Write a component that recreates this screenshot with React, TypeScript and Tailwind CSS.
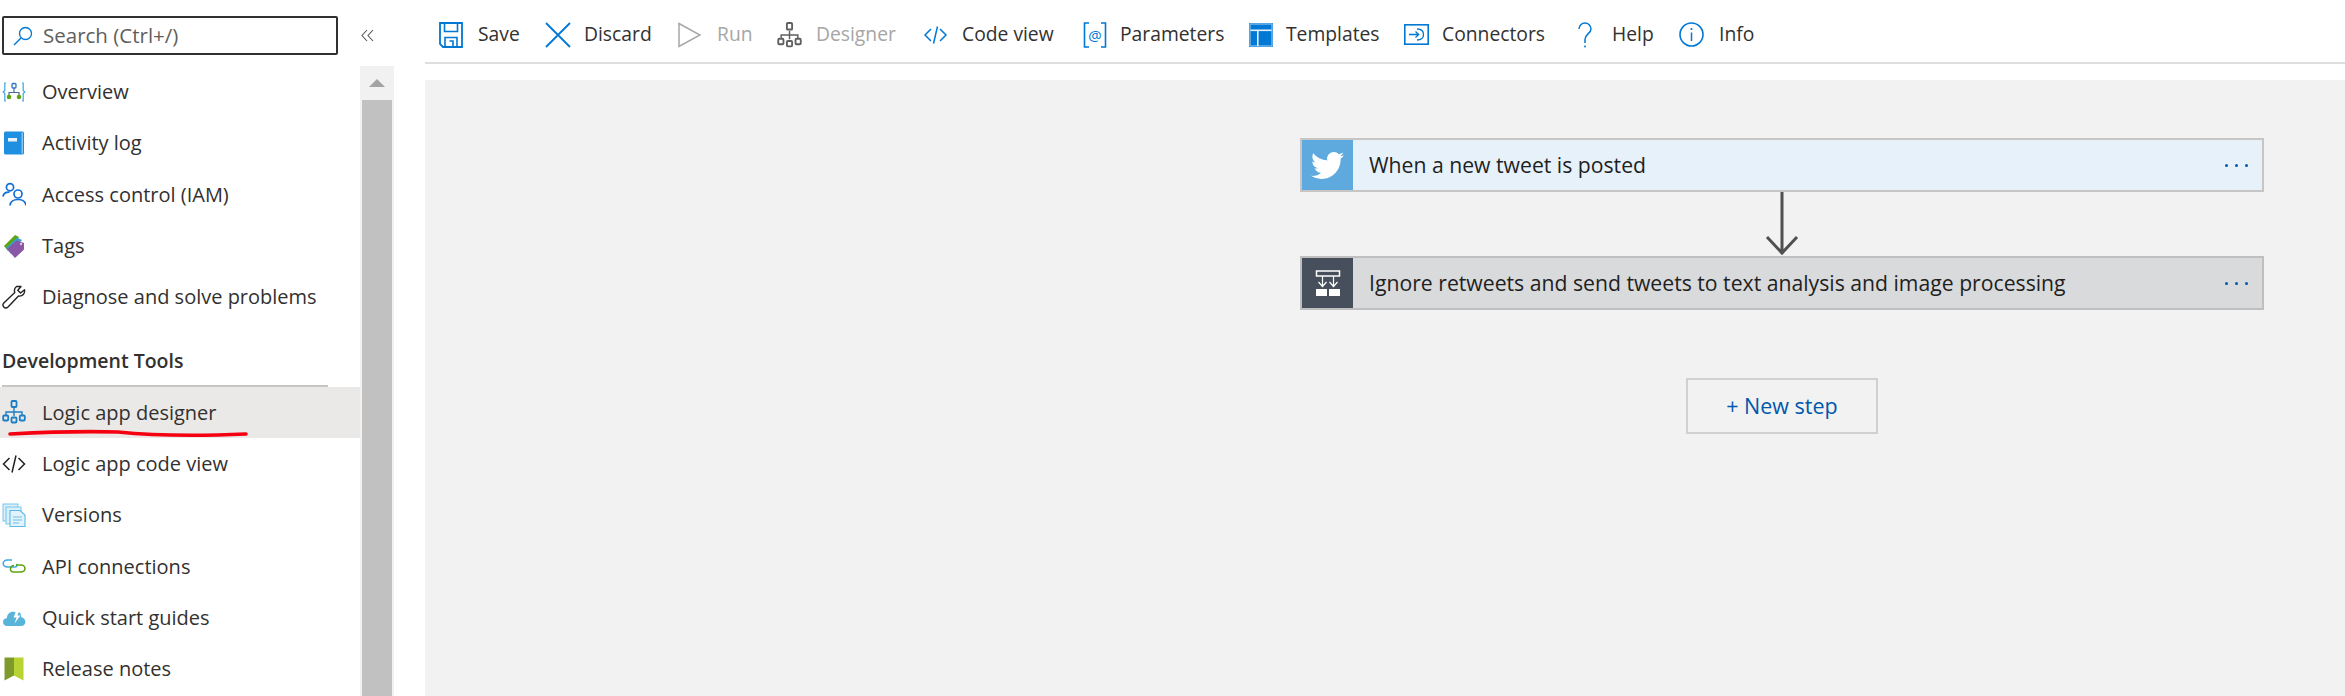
import type { ReactNode } from "react";
import { FaTwitter } from "react-icons/fa";

const BLUE = "#0078d4";

function Svg({ w, h, vb, children }: { w: number; h: number; vb?: string; children: ReactNode }) {
  return (
    <svg width={w} height={h} viewBox={vb ?? `0 0 ${w} ${h}`} fill="none" className="block shrink-0">
      {children}
    </svg>
  );
}

/* sidebar icons, drawn on a 24 box */
const OverviewIcon = () => (
  <Svg w={24} h={24}>
    <path d="M4 3H2.8V10.5L1.2 12L2.8 13.5V21H4M20 3H21.2V10.5L22.8 12L21.2 13.5V21H20" stroke="#3ea8dc" strokeWidth="1.2" />
    <path d="M12 8V12.5M7 16V12.5H17V16" stroke="#4a6d9c" strokeWidth="1.2" />
    <rect x="10" y="3.5" width="4" height="4.5" rx="1" fill="#fff" stroke="#2f74c0" strokeWidth="1.3" />
    <circle cx="7" cy="17" r="2.3" fill="#5ea50f" />
    <circle cx="17" cy="17" r="2.3" fill="#5ea50f" />
  </Svg>
);
const ActivityIcon = () => (
  <Svg w={24} h={24}>
    <rect x="2" y="0.5" width="20" height="23" rx="1.5" fill="#1e8fe1" />
    <rect x="19.5" y="1.5" width="1.5" height="21" fill="#83c4f0" />
    <rect x="6" y="7" width="9" height="3.5" fill="#e6f3fc" />
  </Svg>
);
const AccessIcon = () => (
  <Svg w={24} h={24}>
    <circle cx="8" cy="5.2" r="3.6" stroke="#1570d6" strokeWidth="1.7" />
    <path d="M1 14.5C1.5 11.5 4 10 7.5 10.2" stroke="#1570d6" strokeWidth="1.7" />
    <circle cx="16" cy="12" r="4" stroke="#1570d6" strokeWidth="1.7" />
    <path d="M8 23.5C8.5 19.5 11.5 17.5 16 17.5C20.5 17.5 23.5 19.5 24 23.5" stroke="#1570d6" strokeWidth="1.7" />
  </Svg>
);
const TagsIcon = () => (
  <Svg w={24} h={24}>
    <path d="M2 12L13 1L17 3L6 17Z" fill="#5ea50f" />
    <path d="M4 14L15 3.5L20 6L9 20Z" fill="#3aa0c8" />
    <path d="M5 15L14.5 6.5L22 9V15.5L13 24Z" fill="#8a56a8" />
    <circle cx="19" cy="10" r="1.2" fill="#d9c8e6" />
  </Svg>
);
const WrenchIcon = () => (
  <Svg w={24} h={24}>
    <path d="M14.5 1.5L19 1.5L15.8 5.2L18.5 8L22.5 4.8C23.2 8.5 20.5 11.8 16.5 11L6 22C4.5 23.3 2.8 23 1.8 22C0.8 21 0.6 19.5 1.8 18L12.8 7.5C12 5 13 2.5 14.5 1.5Z" stroke="#222" strokeWidth="1.4" strokeLinejoin="round" />
  </Svg>
);
const TreeIcon = ({ color, w = 24, h = 24 }: { color: string; w?: number; h?: number }) => (
  <svg width={w} height={h} viewBox="0 0 24 24" preserveAspectRatio="none" fill="none" className="block shrink-0">
    <path d="M12 8V15M4 15.5V12H20V15.5M12 12V16" stroke={color} strokeWidth="1.4" />
    <rect x="9.5" y="1" width="5" height="6" rx="0.8" fill="none" stroke={color} strokeWidth="1.8" />
    <rect x="1.2" y="15.5" width="5" height="5" rx="1" fill="none" stroke={color} strokeWidth="1.8" />
    <rect x="9.5" y="17.5" width="5" height="5" rx="1" fill="none" stroke={color} strokeWidth="1.8" />
    <rect x="17.8" y="15.5" width="5" height="5" rx="1" fill="none" stroke={color} strokeWidth="1.8" />
  </svg>
);
const CodeIcon = ({ color, w = 24 }: { color: string; w?: number }) => (
  <Svg w={w} h={24} vb="0 0 24 24">
    <path d="M7.5 6L1.5 12L7.5 18M16.5 6L22.5 12L16.5 18M14 3.5L10 20.5" stroke={color} strokeWidth="1.5" />
  </Svg>
);
const VersionsIcon = () => (
  <Svg w={24} h={24}>
    <rect x="1" y="1" width="15" height="17" fill="#d9effa" stroke="#7cc6ea" />
    <rect x="4" y="4" width="15" height="17" fill="#d9effa" stroke="#7cc6ea" />
    <path d="M8 7.5H18L23 12V23.5H8Z" fill="#e3f3fb" stroke="#5cb8e6" strokeWidth="1.1" />
    <path d="M11 14H20M11 17H20M11 20H17" stroke="#6fc0e8" strokeWidth="1.2" />
  </Svg>
);
const ApiIcon = () => (
  <Svg w={24} h={24}>
    <path d="M10 6H5.5C3 6 1.2 7.6 1.2 9.5C1.2 11.4 3 13 5.5 13H13C14.5 13 15.5 11.5 14.5 10" stroke="#3ea8dc" strokeWidth="1.6" />
    <path d="M14 11H19C21.3 11 23 12.6 23 14.5C23 16.4 21.3 18 19 18H11.5C9.5 18 8 16.5 8.5 14.5C9 12 11 11.5 12 11.5" stroke="#5ea50f" strokeWidth="1.6" />
  </Svg>
);
const CloudIcon = () => (
  <Svg w={24} h={24}>
    <path d="M5 20C2.5 20 1 18.2 1 16C1 13.8 2.6 12.2 4.8 12.2C5 8.5 7.8 5.8 11 5.8C12.3 5.8 13.6 6.2 14.5 7L18 6.5C18.8 8 19.2 9.5 19.2 11.2C21.6 11.6 23.4 13.5 23.4 16C23.4 18.3 21.7 20 19.2 20Z" fill="#59b4d9" />
    <path d="M15 3L11.5 11.5H14.5L12.5 17.5L18.5 9.5H15.5L17.5 3Z" fill="#fff" />
  </Svg>
);
const BookmarkIcon = () => (
  <Svg w={24} h={24}>
    <path d="M2.5 0.5H12V18.5L2.5 23.5Z" fill="#7f9a2c" />
    <path d="M12 0.5H21.5V23.5L12 18.5Z" fill="#b8d432" />
  </Svg>
);

/* toolbar icons */
const SaveIcon = () => (
  <Svg w={24} h={26}>
    <path d="M1 1H23V25H4L1 22Z" stroke={BLUE} strokeWidth="1.8" />
    <path d="M5.5 1V9.5H18.5V1M6 25V15.5H18V25M10.5 19H14V25" stroke={BLUE} strokeWidth="1.6" />
  </Svg>
);
const DiscardIcon = () => (
  <Svg w={26} h={26}>
    <path d="M1 1L25 25M25 1L1 25" stroke={BLUE} strokeWidth="1.8" />
  </Svg>
);
const RunIcon = () => (
  <Svg w={23} h={26}>
    <path d="M1 1.5L22 13L1 24.5Z" stroke="#a6a6a6" strokeWidth="1.5" />
  </Svg>
);
const ParamsIcon = () => (
  <Svg w={24} h={26}>
    <path d="M6 1H1.5V25H6M18 1H22.5V25H18" stroke={BLUE} strokeWidth="1.6" />
    <text x="12" y="18.5" textAnchor="middle" fontSize="15" fontFamily="Open Sans, sans-serif" fill={BLUE}>@</text>
  </Svg>
);
const TemplatesIcon = () => (
  <Svg w={24} h={24}>
    <rect width="24" height="24" fill={BLUE} />
    <rect x="1" y="1" width="22" height="22" stroke="#8cc4ec" strokeWidth="1.2" />
    <rect x="1.5" y="6.5" width="21" height="1.6" fill="#e3f1fb" />
    <rect x="8" y="7" width="1.6" height="16" fill="#e3f1fb" />
  </Svg>
);
const ConnectorsIcon = () => (
  <Svg w={25} h={21}>
    <rect x="0.8" y="0.8" width="23.4" height="19.4" stroke={BLUE} strokeWidth="1.6" />
    <path d="M5 10.5H14.5M11.5 7.5L14.7 10.5L11.5 13.5M13 5C17.5 5 19.5 7.5 19.5 10.5C19.5 13.5 17.5 16 13 16" stroke={BLUE} strokeWidth="1.3" />
  </Svg>
);
const HelpIcon = () => (
  <Svg w={16} h={26}>
    <path d="M2 7C2 3.5 4.8 1 8 1C11.2 1 14 3.5 14 7C14 11.5 8 12 8 17.5V21" stroke={BLUE} strokeWidth="1.5" />
    <circle cx="8" cy="24.5" r="1" fill={BLUE} />
  </Svg>
);
const InfoIcon = () => (
  <Svg w={25} h={25}>
    <circle cx="12.5" cy="12.5" r="11.5" stroke={BLUE} strokeWidth="1.6" />
    <path d="M12.5 10.5V19" stroke={BLUE} strokeWidth="1.5" />
    <circle cx="12.5" cy="7" r="1.1" fill={BLUE} />
  </Svg>
);
const ControlIcon = () => (
  <Svg w={26} h={26}>
    <rect x="1.5" y="1" width="23" height="5" stroke="#fff" strokeWidth="1.5" />
    <path d="M7.5 6V16.5M18.5 6V16.5M3.5 12L7.5 16.5L11.5 12M14.5 12L18.5 16.5L22.5 12" stroke="#fff" strokeWidth="1.2" />
    <rect x="1" y="19" width="11" height="7" fill="#fff" />
    <rect x="14" y="19" width="11" height="7" fill="#fff" />
  </Svg>
);

const NAV_TOP: { label: string; icon: ReactNode }[] = [
  { label: "Overview", icon: <OverviewIcon /> },
  { label: "Activity log", icon: <ActivityIcon /> },
  { label: "Access control (IAM)", icon: <AccessIcon /> },
  { label: "Tags", icon: <TagsIcon /> },
  { label: "Diagnose and solve problems", icon: <WrenchIcon /> },
];

const NAV_BOTTOM: { label: string; icon: ReactNode }[] = [
  { label: "Logic app code view", icon: <CodeIcon color="#222" /> },
  { label: "Versions", icon: <VersionsIcon /> },
  { label: "API connections", icon: <ApiIcon /> },
  { label: "Quick start guides", icon: <CloudIcon /> },
  { label: "Release notes", icon: <BookmarkIcon /> },
];

const TOOLBAR: { label: string; icon: ReactNode; disabled?: boolean; cls: string }[] = [
  { label: "Save", icon: <SaveIcon />, cls: "w-[106px] gap-[15px]" },
  { label: "Discard", icon: <DiscardIcon />, cls: "w-[133px] gap-[13px]" },
  { label: "Run", icon: <RunIcon />, disabled: true, cls: "w-[99px] gap-[16px]" },
  { label: "Designer", icon: <TreeIcon color="#5f5f5f" w={25} h={26} />, disabled: true, cls: "w-[146px] gap-[14px]" },
  { label: "Code view", icon: <CodeIcon color={BLUE} w={25} />, cls: "w-[160px] gap-[14px]" },
  { label: "Parameters", icon: <ParamsIcon />, cls: "w-[166px] gap-[13px]" },
  { label: "Templates", icon: <TemplatesIcon />, cls: "w-[155px] gap-[13px]" },
  { label: "Connectors", icon: <ConnectorsIcon />, cls: "w-[173px] gap-[13px]" },
  { label: "Help", icon: <HelpIcon />, cls: "w-[102px] gap-[19px]" },
  { label: "Info", icon: <InfoIcon />, cls: "gap-[15px]" },
];

function NavRow({ label, icon }: { label: string; icon: ReactNode }) {
  return (
    <div className="flex h-[51.3px] items-center pl-[2px] text-[#323130]">
      <span className="w-[40px] shrink-0">{icon}</span>
      <span className="pt-[1px]">{label}</span>
    </div>
  );
}

function Sidebar() {
  return (
    <aside className="flex w-[425px] shrink-0 flex-col text-[20px]">
      <div className="flex h-[66px] shrink-0 items-start pt-[16px]">
        <div className="ml-[2px] flex h-[39px] w-[336px] items-center rounded-[2px] border-2 border-[#323130] pl-[9px]">
          <svg width="20" height="20" viewBox="0 0 20 20" fill="none" className="mr-[10px] block shrink-0">
            <circle cx="12.5" cy="7.5" r="6" stroke={BLUE} strokeWidth="1.3" />
            <path d="M8 12L1 19" stroke={BLUE} strokeWidth="1.5" />
          </svg>
          <span className="text-[20.5px] text-[#605e5c]">Search (Ctrl+/)</span>
        </div>
        <svg width="13" height="13" viewBox="0 0 13 13" fill="none" className="mt-[13px] ml-[23px] block">
          <path d="M6 1L1 6.5L6 12M12 1L7 6.5L12 12" stroke="#555555" strokeWidth="1.1" />
        </svg>
      </div>
      <div className="flex min-h-0 flex-1">
        <nav className="w-[360px] shrink-0">
          {NAV_TOP.map((item) => (
            <NavRow key={item.label} {...item} />
          ))}
          <div className="mt-[24.5px] ml-[2px] w-[326px] border-b-2 border-[#c8c6c4] pb-[10px] text-[19.5px] font-semibold leading-[28px] text-[#323130]">
            Development Tools
          </div>
          <div className="relative flex h-[51px] items-center bg-[#ebe9e8] pl-[2px] text-[#323130]">
            <span className="w-[40px] shrink-0">
              <TreeIcon color="#1b7ec4" />
            </span>
            <span className="pt-[1px]">Logic app designer</span>
            <svg width="240" height="9" viewBox="0 0 240 9" fill="none" className="absolute top-[42px] left-[8px]">
              <path d="M2 5C40 3 80 2 110 3C140 6 190 7 238 5" stroke="#f50010" strokeWidth="3.6" strokeLinecap="round" />
            </svg>
          </div>
          {NAV_BOTTOM.map((item) => (
            <NavRow key={item.label} {...item} />
          ))}
        </nav>
        <div className="flex w-[34px] shrink-0 flex-col items-center bg-[#f1f1f1]">
          <div className="flex h-[34px] w-full shrink-0 items-center justify-center">
            <div className="h-0 w-0 border-x-[8px] border-b-[8px] border-x-transparent border-b-[#a3a3a3]" />
          </div>
          <div className="w-[30px] flex-1 bg-[#c1c1c1]" />
        </div>
      </div>
    </aside>
  );
}

function Toolbar() {
  return (
    <div className="flex h-[64px] shrink-0 items-center border-b-2 border-[#dedede] pt-[7px] pl-[14px] text-[19.3px]">
      {TOOLBAR.map((item) => (
        <div key={item.label} className={`flex shrink-0 items-center ${item.cls}`}>
          {item.icon}
          <span className={item.disabled ? "text-[#a6a6a6]" : "text-[#323130]"}>{item.label}</span>
        </div>
      ))}
    </div>
  );
}

function Dots() {
  return (
    <div className="mr-[14px] ml-auto flex gap-[7px]">
      <span className="size-[3px] rounded-full bg-[#0058ad]" />
      <span className="size-[3px] rounded-full bg-[#0058ad]" />
      <span className="size-[3px] rounded-full bg-[#0058ad]" />
    </div>
  );
}

function Canvas() {
  return (
    <div className="mt-[16px] flex-1 bg-[#f2f2f2] pt-[58px] pl-[875px]">
      <div className="flex h-[54px] w-[964px] items-center border-2 border-[#c8c6c4] bg-[#e6f1fa] text-[21.2px] text-[#1f1f1f]">
        <div className="flex h-full w-[51px] shrink-0 items-center justify-center bg-[#5ea9dd]">
          <FaTwitter className="text-[33px] text-white" />
        </div>
        <span className="ml-[16px]">When a new tweet is posted</span>
        <Dots />
      </div>
      <div className="flex w-[964px] justify-center">
        <svg width="34" height="64" viewBox="0 0 34 64" fill="none" className="block">
          <path d="M17 0V62M2 45L17 61L32 45" stroke="#505050" strokeWidth="3" />
        </svg>
      </div>
      <div className="flex h-[54px] w-[964px] items-center border-2 border-[#bfbfbf] bg-[#d9dadc] text-[21.2px] text-[#1f1f1f]">
        <div className="flex h-full w-[51px] shrink-0 items-center justify-center bg-[#474f5c]">
          <ControlIcon />
        </div>
        <span className="ml-[16px]">Ignore retweets and send tweets to text analysis and image processing</span>
        <Dots />
      </div>
      <div className="mt-[68px] ml-[386px] flex h-[56px] w-[192px] items-center justify-center border-2 border-[#d0d0d0] text-[21.5px] text-[#0058ad]">
        + New step
      </div>
    </div>
  );
}

export default function App() {
  return (
    <div className="flex h-[696px] w-[2345px] overflow-hidden bg-white font-['Open_Sans',sans-serif]">
      <Sidebar />
      <main className="flex min-w-0 flex-1 flex-col">
        <Toolbar />
        <Canvas />
      </main>
    </div>
  );
}
